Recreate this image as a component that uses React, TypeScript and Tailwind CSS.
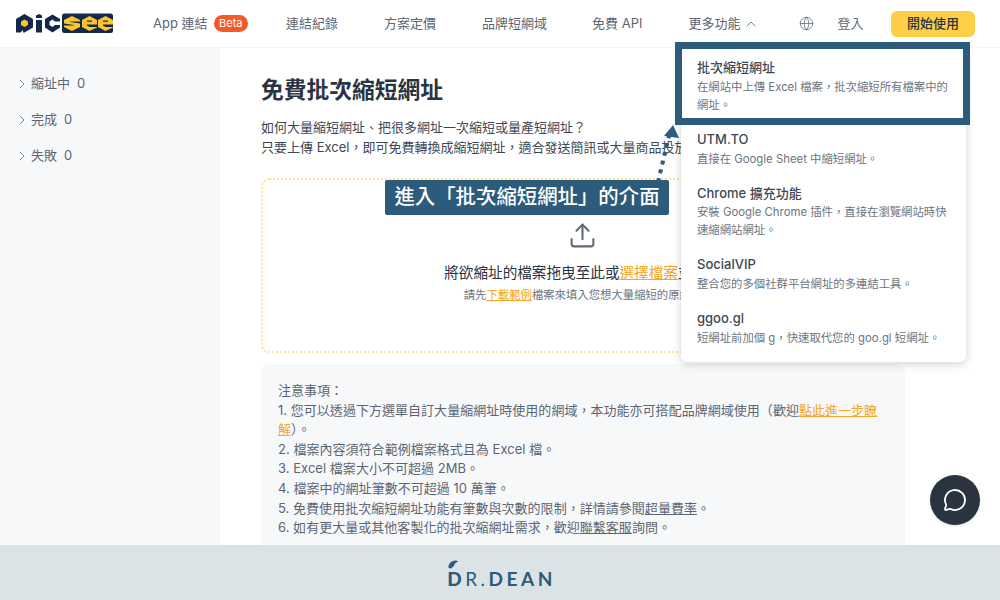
import React from "react";
import { ChevronRight, ChevronUp, Globe, MessageCircle, Upload } from "lucide-react";

const FONT = "font-['Inter','Noto_Sans_CJK_TC',sans-serif]";

const navItems = ["連結紀錄", "方案定價", "品牌短網域", "免費 API"];

const sideItems = [
  { label: "縮址中", count: 0 },
  { label: "完成", count: 0 },
  { label: "失敗", count: 0 },
];

const menuItems = [
  { title: "批次縮短網址", desc: "在網站中上傳 Excel 檔案，批次縮短所有檔案中的網址。" },
  { title: "UTM.TO", desc: "直接在 Google Sheet 中縮短網址。" },
  { title: "Chrome 擴充功能", desc: "安裝 Google Chrome 插件，直接在瀏覽網站時快速縮網站網址。" },
  { title: "SocialVIP", desc: "整合您的多個社群平台網址的多連結工具。" },
  { title: "ggoo.gl", desc: "短網址前加個 g，快速取代您的 goo.gl 短網址。" },
];

const Logo = () => (
  <svg width="98" height="21" viewBox="0 0 98 21" className="shrink-0">
    {/* p */}
    <path d="M0 6 L8.5 1 L17 6 V14.5 L8.5 19.5 H7 V17 L4.5 19.5 H0 Z" fill="#14284b" />
    <path d="M8.5 6.5 L12 8.5 V12 L8.5 14 L5 12 V8.5 Z" fill="#fbc531" />
    {/* i */}
    <path d="M20 7 H26 V19.5 H20 Z" fill="#14284b" />
    <path d="M23 1 L26 2.5 V5 H20 V2.5 Z" fill="#14284b" />
    {/* c */}
    <path d="M29 6 L36.5 1.5 L44 6 V8.5 H39 L36.5 6.5 L33.5 8.5 V12 L36.5 14 L39 12 H44 V14.5 L36.5 19.5 L29 14.5 Z" fill="#14284b" />
    {/* see */}
    <rect x="46" y="0.5" width="51" height="19.5" rx="2.5" fill="#14284b" />
    <path d="M48 7 L56 3 L64 7 V8.5 H54 V9 L64 10.5 V14 L56 18 L48 14 V12.5 H58 V12 L48 10.5 Z" fill="#fbc531" />
    <path d="M66 7 L73.5 3 L81 7 V11.5 H71 V12.5 L73.5 14 H81 V14.5 L73.5 18 L66 14 Z" fill="#fbc531" />
    <rect x="71" y="7.5" width="5" height="1.2" fill="#14284b" />
    <path d="M82 7 L89.5 3 L97 7 V11.5 H87 V12.5 L89.5 14 H97 V14.5 L89.5 18 L82 14 Z" fill="#fbc531" />
    <rect x="87" y="7.5" width="5" height="1.2" fill="#14284b" />
  </svg>
);

const Header = () => (
  <header className="h-[48px] shrink-0 bg-white flex items-center pl-4 pr-[25px] border-b border-[#f5f6f8]">
    <Logo />
    <nav className="flex items-center gap-[46px] ml-[39px] text-[13px] text-[#5c6672]">
      <div className="flex items-center gap-[6px] -mr-2">
        <span>App 連結</span>
        <span className="bg-[#f4592a] text-white text-[11px] leading-[17px] px-[5.5px] rounded-full">Beta</span>
      </div>
      {navItems.map((n, i) => (
        <span key={n} className={i === 3 ? "-ml-[1px]" : ""}>
          {n}
        </span>
      ))}
      <div className="flex items-center gap-[3px]">
        <span>更多功能</span>
        <ChevronUp size={16} strokeWidth={1.2} />
      </div>
    </nav>
    <Globe size={15} strokeWidth={1.2} className="ml-[40px] text-[#5c6672]" />
    <span className="ml-[23px] text-[13px] text-[#5c6672]">登入</span>
    <button className="ml-auto w-[84px] h-[26px] rounded-[6px] bg-[#ffcf48] text-[13px] font-medium text-[#2a3441]">
      開始使用
    </button>
  </header>
);

const Sidebar = () => (
  <aside className="w-[220px] shrink-0 bg-[#f7f8fa] pt-[18px] pl-[14px] text-[13px] text-[#5c6672]">
    {sideItems.map((s) => (
      <div key={s.label} className="h-[36px] flex items-center gap-[1px]">
        <ChevronRight size={16} strokeWidth={1.1} />
        <span>{s.label}</span>
        <span className="ml-[6px]">{s.count}</span>
      </div>
    ))}
  </aside>
);

const Main = () => (
  <main className="flex-1 min-w-0 overflow-hidden bg-white pl-[41px] pr-[95px] pt-[27px]">
    <h1 className="text-[22.75px] leading-[30px] font-bold text-[#2a3441]">免費批次縮短網址</h1>
    <p className="mt-[13px] text-[13px] leading-[19.5px] text-[#3d4754] whitespace-nowrap">
      如何大量縮短網址、把很多網址一次縮短或量產短網址？
      <br />
      只要上傳 Excel，即可免費轉換成縮短網址，適合發送簡訊或大量商品投放廣告使用。
    </p>
    <div className="mt-[21px] h-[175px] border-2 border-dotted border-[#fde29a] rounded-[8px] flex flex-col items-center pt-[41px]">
      <Upload size={29} strokeWidth={1.7} className="text-[#5c6a78] -ml-[1px]" />
      <p className="mt-[12px] text-[14.625px] leading-[22px] text-[#2a3441]">
        將欲縮址的檔案拖曳至此或
        <span className="text-[#f5a623] underline">選擇檔案</span>
        並上傳
      </p>
      <p className="mt-[2px] text-[11.375px] leading-[18px] text-[#6b7580]">
        請先<span className="text-[#f5a623] underline">下載範例</span>檔案來填入您想大量縮短的原網址
      </p>
    </div>
    <div className="mt-[11px] bg-[#f7f8fa] rounded-t-[8px] pl-[17px] pr-4 pt-[17px] pb-4 text-[13px] leading-[19.6px] tracking-[0.03px] text-[#5c6672]">
      <p>注意事項：</p>
      <p>
        1. 您可以透過下方選單自訂大量縮網址時使用的網域，本功能亦可搭配品牌網域使用（歡迎
        <span className="text-[#f5a623] underline">點此進一步瞭解</span>）。
      </p>
      <p>2. 檔案內容須符合範例檔案格式且為 Excel 檔。</p>
      <p>3. Excel 檔案大小不可超過 2MB。</p>
      <p>4. 檔案中的網址筆數不可超過 10 萬筆。</p>
      <p>
        5. 免費使用批次縮短網址功能有筆數與次數的限制，詳情請參閱<span className="underline">超量費率</span>。
      </p>
      <p>
        6. 如有更大量或其他客製化的批次縮網址需求，歡迎<span className="underline">聯繫客服</span>詢問。
      </p>
    </div>
  </main>
);

const MoreMenu = () => (
  <div className="absolute left-[681px] top-[48px] w-[285px] bg-white rounded-[6px] shadow-[0_2px_10px_rgba(0,0,0,0.18)] pt-[2px] pb-[7px] z-10">
    {menuItems.map((m) => (
      <div key={m.title} className="px-4 py-[8px]">
        <div className="text-[13px] leading-[19.75px] font-medium text-[#3d4754]">{m.title}</div>
        <div className="text-[11.375px] leading-[18px] text-[#6b7580]">{m.desc}</div>
      </div>
    ))}
  </div>
);

// 標註：框線、虛線箭頭、說明文字
const Annotation = () => (
  <>
    <div className="absolute left-[675px] top-[42px] w-[295px] h-[83px] border-[7px] border-[#2c5b7b] z-20" />
    <svg className="absolute left-[650px] top-[120px] z-20" width="40" height="65" viewBox="0 0 40 65">
      <path d="M8 62 L19 16" stroke="#2c5b7b" strokeWidth="4" strokeDasharray="4 5" fill="none" />
      <path d="M23 5 L14 16 L29 18 Z" fill="#2c5b7b" />
    </svg>
    <div className="absolute left-[385px] top-[180px] w-[284px] h-[35px] bg-[#2c5b7b] rounded-[2px] z-20 flex items-center justify-center text-white text-[20.4px] font-medium">
      進入「批次縮短網址」的介面
    </div>
  </>
);

const Footer = () => (
  <footer className="h-[55px] shrink-0 bg-[#dce3e6] flex items-center justify-center">
    <div className="relative mt-[12px] ml-[3px] text-[#2c5b7b] text-[19px] leading-[24px] tracking-[3.5px] whitespace-nowrap font-['Lato',sans-serif]">
      <svg className="absolute left-[1px] -top-[7px]" width="11" height="9" viewBox="0 0 11 9">
        <path d="M0.5 8 C0 3.5 3.5 0.5 8 0.5 L10.5 1.5 C7.5 2 6.5 4 6 6 L3 8.5 Z" fill="#2c5b7b" />
      </svg>
      <span className="font-black">D</span>
      <span>R.</span>
      <span className="font-bold">DEAN</span>
    </div>
  </footer>
);

export default function App() {
  return (
    <div className={`relative w-[1000px] h-[600px] overflow-hidden flex flex-col bg-white ${FONT}`}>
      <Header />
      <div className="flex-1 min-h-0 flex">
        <Sidebar />
        <Main />
      </div>
      <Footer />
      <MoreMenu />
      <Annotation />
      <button className="absolute left-[930px] top-[475px] w-[50px] h-[50px] rounded-full bg-[#2a3441] flex items-center justify-center shadow-sm z-10">
        <MessageCircle size={24} strokeWidth={1.8} className="text-white" />
      </button>
    </div>
  );
}
